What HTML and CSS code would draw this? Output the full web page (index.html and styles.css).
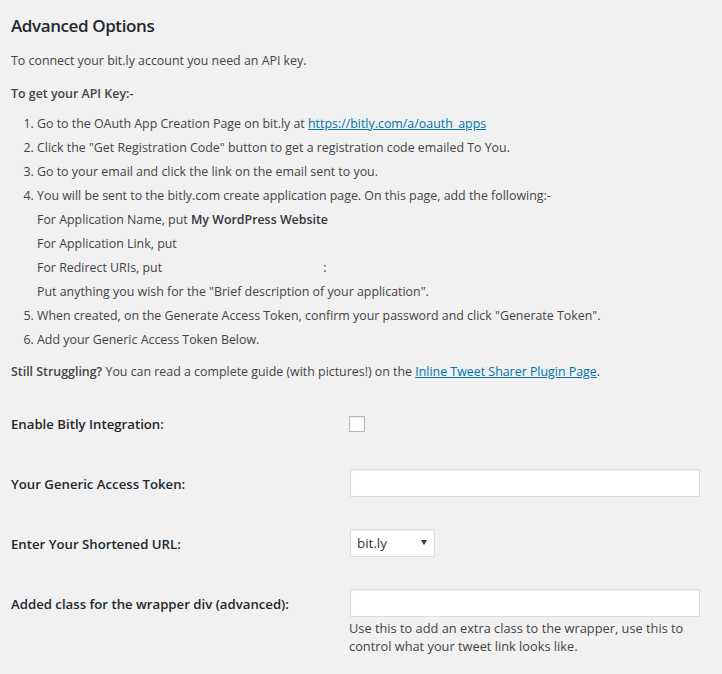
FILE: index.html
```html
<!DOCTYPE html>
<html lang="en">
<head>
<meta charset="utf-8">
<title>Advanced Options</title>
<link rel="stylesheet" href="styles.css">
</head>
<body>
<div class="wrap">
  <h2 class="title">Advanced Options</h2>
  <p class="intro">To connect your bit.ly account you need an API key.</p>
  <p class="intro strong">To get your API Key:-</p>
  <ol class="steps">
    <li>Go to the OAuth App Creation Page on bit.ly at <a href="#">https://bitly.com/a/oauth_apps</a></li>
    <li>Click the "Get Registration Code" button to get a registration code emailed To You.</li>
    <li>Go to your email and click the link on the email sent to you.</li>
    <li>You will be sent to the bitly.com create application page. On this page, add the following:-</li>
    <li class="sub">For Application Name, put <strong>My WordPress Website</strong></li>
    <li class="sub">For Application Link, put</li>
    <li class="sub">For Redirect URIs, put <span class="blank"></span>:</li>
    <li class="sub">Put anything you wish for the "Brief description of your application".</li>
    <li value="5">When created, on the Generate Access Token, confirm your password and click "Generate Token".</li>
    <li>Add your Generic Access Token Below.</li>
  </ol>
  <p class="intro still"><strong>Still Struggling?</strong> You can read a complete guide (with pictures!) on the <a href="#">Inline Tweet Sharer Plugin Page</a>.</p>

  <div class="form">
    <div class="row">
      <label class="label" for="f1">Enable Bitly Integration:</label>
      <div class="field field-check"><input type="checkbox" id="f1" class="check"></div>
    </div>
    <div class="row">
      <label class="label" for="f2">Your Generic Access Token:</label>
      <div class="field"><input type="text" id="f2" class="text"></div>
    </div>
    <div class="row">
      <label class="label" for="f3">Enter Your Shortened URL:</label>
      <div class="field">
        <div class="select-wrap">
          <select id="f3" class="select"><option>bit.ly</option></select>
          <span class="arrow"></span>
        </div>
      </div>
    </div>
    <div class="row row-last">
      <label class="label" for="f4">Added class for the wrapper div (advanced):</label>
      <div class="field">
        <input type="text" id="f4" class="text">
        <p class="desc">Use this to add an extra class to the wrapper, use this to control what your tweet link looks like.</p>
      </div>
    </div>
  </div>
</div>
</body>
</html>
```

FILE: styles.css
```css
html, body {
  margin: 0;
  padding: 0;
  background: #f1f1f1;
}

body {
  font-family: "Open Sans", "Noto Sans", "Liberation Sans", sans-serif;
  font-size: 12.4px;
  color: #444;
  width: 722px;
  height: 674px;
  overflow: hidden;
}

.wrap {
  display: flex;
  flex-direction: column;
  padding: 1px 22px 0 11px;
}

.title {
  margin: 13px 0 0;
  font-size: 17px;
  letter-spacing: -0.4px;
  line-height: 24px;
  font-weight: 600;
  color: #23282d;
}

.intro {
  margin: 14px 0 0;
  line-height: 18px;
}

.strong {
  margin-top: 15px;
  font-weight: 600;
}

.intro strong {
  font-weight: 600;
}

a {
  color: #0073aa;
  text-decoration: underline;
}

.steps {
  margin: 12px 0 0;
  padding: 0 0 0 26px;
}

.steps li {
  line-height: 18px;
  margin: 0 0 6px;
}

.steps li.sub {
  list-style: none;
}

.steps strong {
  font-weight: 600;
  color: #32373c;
}

.blank {
  display: inline-block;
  width: 158px;
}

.still {
  margin-top: 8px;
}

.form {
  margin-top: 19px;
  display: flex;
  flex-direction: column;
}

.row {
  display: flex;
  height: 60px;
}

.row-last {
  height: auto;
}

.label {
  width: 338px;
  flex: none;
  padding-top: 15px;
  line-height: 18px;
  font-size: 13.2px;
  font-weight: 600;
  color: #23282d;
}

.field {
  padding-top: 9px;
  width: 350px;
}

.field-check {
  padding-top: 16px;
}

.check {
  -webkit-appearance: none;
  appearance: none;
  display: block;
  margin: 0;
  width: 16px;
  height: 16px;
  border: 1px solid #b4b9be;
  background: #fff;
  box-shadow: inset 0 1px 2px rgba(0, 0, 0, 0.1);
  box-sizing: border-box;
}

.text {
  display: block;
  box-sizing: border-box;
  margin: 0 0 0 1px;
  width: 350px;
  height: 28px;
  border: 1px solid #ddd;
  background: #fff;
  box-shadow: inset 0 1px 2px rgba(0, 0, 0, 0.07);
  font: inherit;
  padding: 3px 5px;
  outline: none;
}

.select-wrap {
  position: relative;
  width: 85px;
  height: 28px;
  margin-left: 1px;
}

.select {
  -webkit-appearance: none;
  appearance: none;
  display: block;
  box-sizing: border-box;
  width: 85px;
  height: 28px;
  margin: 0;
  border: 1px solid #ddd;
  background: #fff;
  box-shadow: inset 0 1px 2px rgba(0, 0, 0, 0.07);
  font-family: inherit;
  font-size: 13.4px;
  color: #32373c;
  padding: 0 0 0 6px;
  outline: none;
}

.arrow {
  position: absolute;
  right: 8px;
  top: 11px;
  width: 0;
  height: 0;
  border-left: 3px solid transparent;
  border-right: 3px solid transparent;
  border-top: 5px solid #32373c;
}

.desc {
  margin: 2px 0 0;
  line-height: 18px;
  font-size: 12.8px;
  color: #444;
}
```
